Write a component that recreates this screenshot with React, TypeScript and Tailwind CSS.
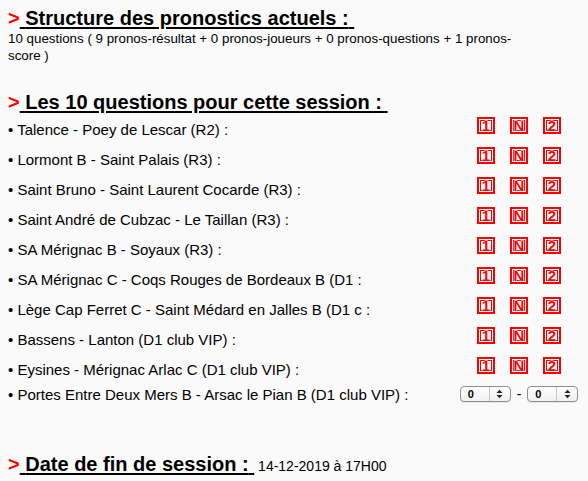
import React from "react";

const rows = [
  "Talence - Poey de Lescar (R2) :",
  "Lormont B - Saint Palais (R3) :",
  "Saint Bruno - Saint Laurent Cocarde (R3) :",
  "Saint André de Cubzac - Le Taillan (R3) :",
  "SA Mérignac B - Soyaux (R3) :",
  "SA Mérignac C - Coqs Rouges de Bordeaux B (D1 :",
  "Lège Cap Ferret C - Saint Médard en Jalles B (D1 c :",
  "Bassens - Lanton (D1 club VIP) :",
  "Eysines - Mérignac Arlac C (D1 club VIP) :",
];

function Box({ label }: { label: string }) {
  return (
    <div className="w-[18px] h-[17px] border-2 border-[#ff0000] bg-white flex items-center justify-center shadow-[inset_0_0_0_1px_#ffffff,inset_0_0_0_2px_#ff0000]">
      <span className="text-[15px] font-bold leading-none text-[#ff0000] [-webkit-text-stroke:1px_#ffffff] [paint-order:stroke_fill]">
        {label}
      </span>
    </div>
  );
}

function FakeSelect() {
  return (
    <div className="w-[51px] h-[16px] rounded-[4px] border border-[#8e8e8e] bg-gradient-to-b from-white to-[#f0f0f0] flex items-stretch shadow-[0_1px_0_rgba(0,0,0,0.08)]">
      <div className="flex-1 flex items-center pl-[7px] text-[11px] font-bold leading-none text-black">0</div>
      <div className="w-px bg-[#c8c8c8]" />
      <div className="w-[20px] flex items-center justify-center">
        <svg width="7" height="10" viewBox="0 0 7 10">
          <path d="M0.5 4 L3.5 0.8 L6.5 4 Z" fill="#222" />
          <path d="M0.5 6 L3.5 9.2 L6.5 6 Z" fill="#222" />
        </svg>
      </div>
    </div>
  );
}

function Heading({ children, after }: { children: React.ReactNode; after?: React.ReactNode }) {
  return (
    <div className="text-[20px] font-bold leading-[23px] text-black">
      <span className="text-[#ff0000]">&gt;</span>
      <span className="underline decoration-[1.5px] underline-offset-[2px]">&nbsp;{children}&nbsp;</span>
      {after}
    </div>
  );
}

export default function App() {
  return (
    <div
      className="min-h-[481px] w-[588px] bg-[#fafafa] text-black pl-[8px] pt-[7px]"
      style={{ fontFamily: '"Liberation Sans", Arial, Helvetica, sans-serif' }}
    >
      <Heading>Structure des pronostics actuels :</Heading>
      <div className="w-[535px] text-[13.35px] leading-[17px]">
        10 questions ( 9 pronos-résultat + 0 pronos-joueurs + 0 pronos-questions + 1 pronos-score )
      </div>

      <div className="mt-[27px]">
        <Heading>Les 10 questions pour cette session :</Heading>
      </div>

      <div className="w-[575px]">
        {rows.map((r) => (
          <div key={r} className="flex items-center h-[30px]">
            <div className="flex-1 text-[15px] leading-[17px] whitespace-nowrap">• {r}</div>
            <div className="w-[128px] flex justify-center gap-[15px] mb-[8px]">
              <Box label="1" />
              <Box label="N" />
              <Box label="2" />
            </div>
          </div>
        ))}
        <div className="flex items-center h-[20px]">
          <div className="flex-1 text-[15px] leading-[17px] whitespace-nowrap">
            • Portes Entre Deux Mers B - Arsac le Pian B (D1 club VIP) :
          </div>
          <div className="w-[128px] flex justify-center items-center gap-[6px]">
            <FakeSelect />
            <span className="text-[14px]">-</span>
            <FakeSelect />
          </div>
        </div>
      </div>

      <div className="mt-[49px]">
        <Heading after={<span className="text-[14px] font-normal"> 14-12-2019 à 17H00</span>}>
          Date de fin de session :
        </Heading>
      </div>
    </div>
  );
}
